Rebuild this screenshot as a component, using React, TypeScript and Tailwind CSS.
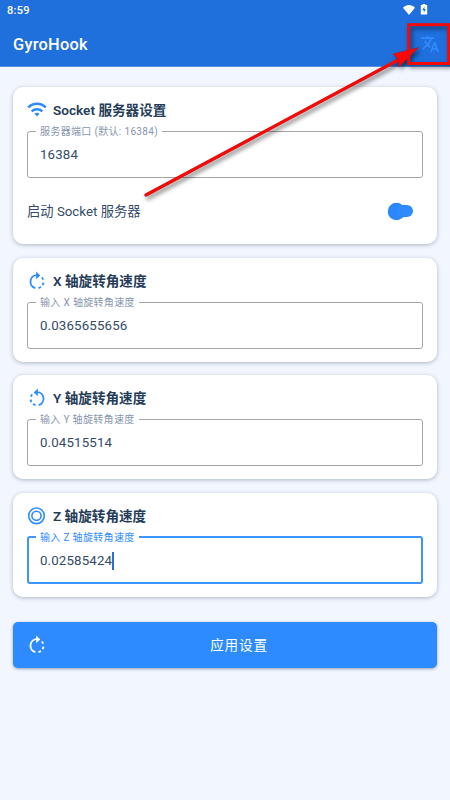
import type { ReactNode } from "react";
import { MdTranslate } from "react-icons/md";

type IconProps = { className?: string };

function WifiIcon({ className }: IconProps) {
  return (
    <svg viewBox="0 0 24 24" className={className} fill="none" stroke="currentColor" strokeWidth="2.9">
      <path d="M1.4 8.9C7.4 3 16.6 3 22.6 8.9" />
      <path d="M5.6 13.7C9.2 10.3 14.8 10.3 18.4 13.7" />
      <path d="M9 16.6C10.7 15 13.3 15 15 16.6L12 19.8Z" fill="currentColor" stroke="none" />
    </svg>
  );
}

function RotateRightIcon({ className }: IconProps) {
  return (
    <svg viewBox="0 0 24 24" className={className} fill="none" stroke="currentColor" strokeWidth="2.2">
      <path d="M10 20.6A8 8 0 0 1 12 4.9" />
      <path d="M11 0.6L15.9 5.3L11 9.8Z" fill="currentColor" stroke="none" />
      <path d="M17.9 7.6L19.4 10.4" />
      <path d="M19.9 13.9L18.7 17" />
      <path d="M16.8 19.2L13.8 20.6" />
    </svg>
  );
}

function RotateLeftIcon({ className }: IconProps) {
  return (
    <svg viewBox="0 0 24 24" className={className} fill="none" stroke="currentColor" strokeWidth="2.2">
      <path d="M14 20.6A8 8 0 0 0 12 4.9" />
      <path d="M13 0.6L8.1 5.3L13 9.8Z" fill="currentColor" stroke="none" />
      <path d="M6.1 7.6L4.6 10.4" />
      <path d="M4.1 13.9L5.3 17" />
      <path d="M7.2 19.2L10.2 20.6" />
    </svg>
  );
}

function RingsIcon({ className }: IconProps) {
  return (
    <svg viewBox="0 0 20 20" className={className} fill="none" stroke="currentColor" strokeWidth="1.6">
      <circle cx="9.5" cy="9.8" r="7.8" />
      <circle cx="9.5" cy="9.8" r="4.6" />
    </svg>
  );
}

function Card({ icon, title, className, children }: { icon: ReactNode; title: string; className: string; children: ReactNode }) {
  return (
    <section className={`rounded-[10px] bg-white px-3.5 pt-[13px] shadow-[0_1px_4px_rgba(30,50,80,0.32)] ${className}`}>
      <div className="flex h-5 items-center">
        <span className="flex w-[26px] text-[#2d8bff]">{icon}</span>
        <h2 className="whitespace-nowrap text-[13.6px] font-semibold leading-5 text-[#253c58]">{title}</h2>
      </div>
      <div className="mt-[5px]">{children}</div>
    </section>
  );
}

function Field({ label, value, active }: { label: string; value: string; active?: boolean }) {
  return (
    <fieldset
      className={`h-[53px] rounded-[3px] ${active ? "border-2 border-[#3f95ff] px-[7px]" : "border border-[#a5a5a5] px-2"}`}
    >
      <legend
        className={`h-3 whitespace-nowrap px-1 text-[10px] leading-[14px] tracking-[0.33px] ${active ? "text-[#2d8bff]" : "text-[#8796ae]"}`}
      >
        {label}
      </legend>
      <div className="flex h-[36px] items-center px-1 text-[13.3px] tracking-[0.14px] text-[#334b68]">
        {value}
        {active && <span className="h-[18px] w-[1.5px] bg-[#2d6fd0]" />}
      </div>
    </fieldset>
  );
}

function Annotation() {
  return (
    <svg className="pointer-events-none absolute left-0 top-0 h-[220px] w-[450px]" viewBox="0 0 450 220">
      <g className="drop-shadow-[2px_3px_2px_rgba(0,0,0,0.5)]">
        <path d="M146 195L400 59" stroke="#a33" strokeWidth="3.2" strokeLinecap="round" />
        <path d="M146 195L400 59" stroke="#ff0505" strokeWidth="2.6" strokeLinecap="round" />
        <path d="M418.5 47.5L393 54L398 59L399 67Z" fill="#ff0505" stroke="#a31a1a" strokeWidth="0.5" />
        <rect x="408.7" y="24.7" width="40" height="38.8" fill="none" stroke="#f50808" strokeWidth="3" />
      </g>
    </svg>
  );
}

export default function App() {
  return (
    <div className="relative h-[800px] w-[450px] overflow-hidden bg-[#f2f6fe] font-[Roboto,'Noto_Sans_CJK_SC',sans-serif]">
      <header className="h-[67px] border-b border-[#5a92df] bg-[#1f6fdc] text-white">
        <div className="flex h-5 items-center justify-between pl-[7px] pr-[22px]">
          <span className="pt-0.5 text-[11px] font-medium tracking-[0.3px]">8:59</span>
          <span className="flex items-center gap-[5px]">
            <svg viewBox="0 0 12 10" className="h-2.5 w-3">
              <path d="M6 10L0 2.7C3.5-.9 8.5-.9 12 2.7Z" fill="currentColor" />
            </svg>
            <svg viewBox="0 0 8 11" className="mb-0.5 h-[11px] w-2">
              <path d="M2.6 0h2.8v1.1H7.2v9.4H.8V1.1h1.8z" fill="currentColor" />
              <path d="M4.4 2.5L2.3 6.3h1.5v2.5L5.8 5H4.4z" fill="#1f6fdc" />
            </svg>
          </span>
        </div>
        <div className="flex h-12 items-center justify-between pl-[13px] pr-2.5">
          <h1 className="pt-0.5 text-[16.4px] font-medium tracking-[0.25px]">GyroHook</h1>
          <MdTranslate className="mb-px size-5 text-[#328cff]" />
        </div>
      </header>

      <main className="flex flex-col px-[13px] pt-5">
        <Card icon={<WifiIcon className="size-5" />} title="Socket 服务器设置" className="h-[157px]">
          <Field label="服务器端口 (默认: 16384)" value="16384" />
          <div className="mt-6 flex h-5 items-center justify-between pr-2.5">
            <span className="text-[13.3px] text-[#334b68]">启动 Socket 服务器</span>
            <span className="mb-0.5 flex items-center">
              <span className="size-[17px] rounded-full bg-[#2d87fa] shadow-[0_0_1px_#2d6fd0]" />
              <span className="-ml-2 h-3 w-4 rounded-r-full bg-[#2d8bff]" />
            </span>
          </div>
        </Card>

        <Card icon={<RotateRightIcon className="size-5" />} title="X 轴旋转角速度" className="mt-3.5 h-[104px]">
          <Field label="输入 X 轴旋转角速度" value="0.0365655656" />
        </Card>

        <Card icon={<RotateLeftIcon className="size-5" />} title="Y 轴旋转角速度" className="mt-[13px] h-[104px]">
          <Field label="输入 Y 轴旋转角速度" value="0.04515514" />
        </Card>

        <Card icon={<RingsIcon className="size-5" />} title="Z 轴旋转角速度" className="mt-3.5 h-[104px]">
          <Field label="输入 Z 轴旋转角速度" value="0.02585424" active />
        </Card>

        <button className="mt-[25px] flex h-[46px] items-center rounded-[5px] bg-[#2d8bff] px-3.5 text-white shadow-[0_1px_3px_rgba(30,50,80,0.45)]">
          <RotateRightIcon className="size-5" />
          <span className="flex-1 pl-2 text-center text-[13.6px] tracking-[0.8px]">应用设置</span>
        </button>
      </main>

      <Annotation />
    </div>
  );
}
